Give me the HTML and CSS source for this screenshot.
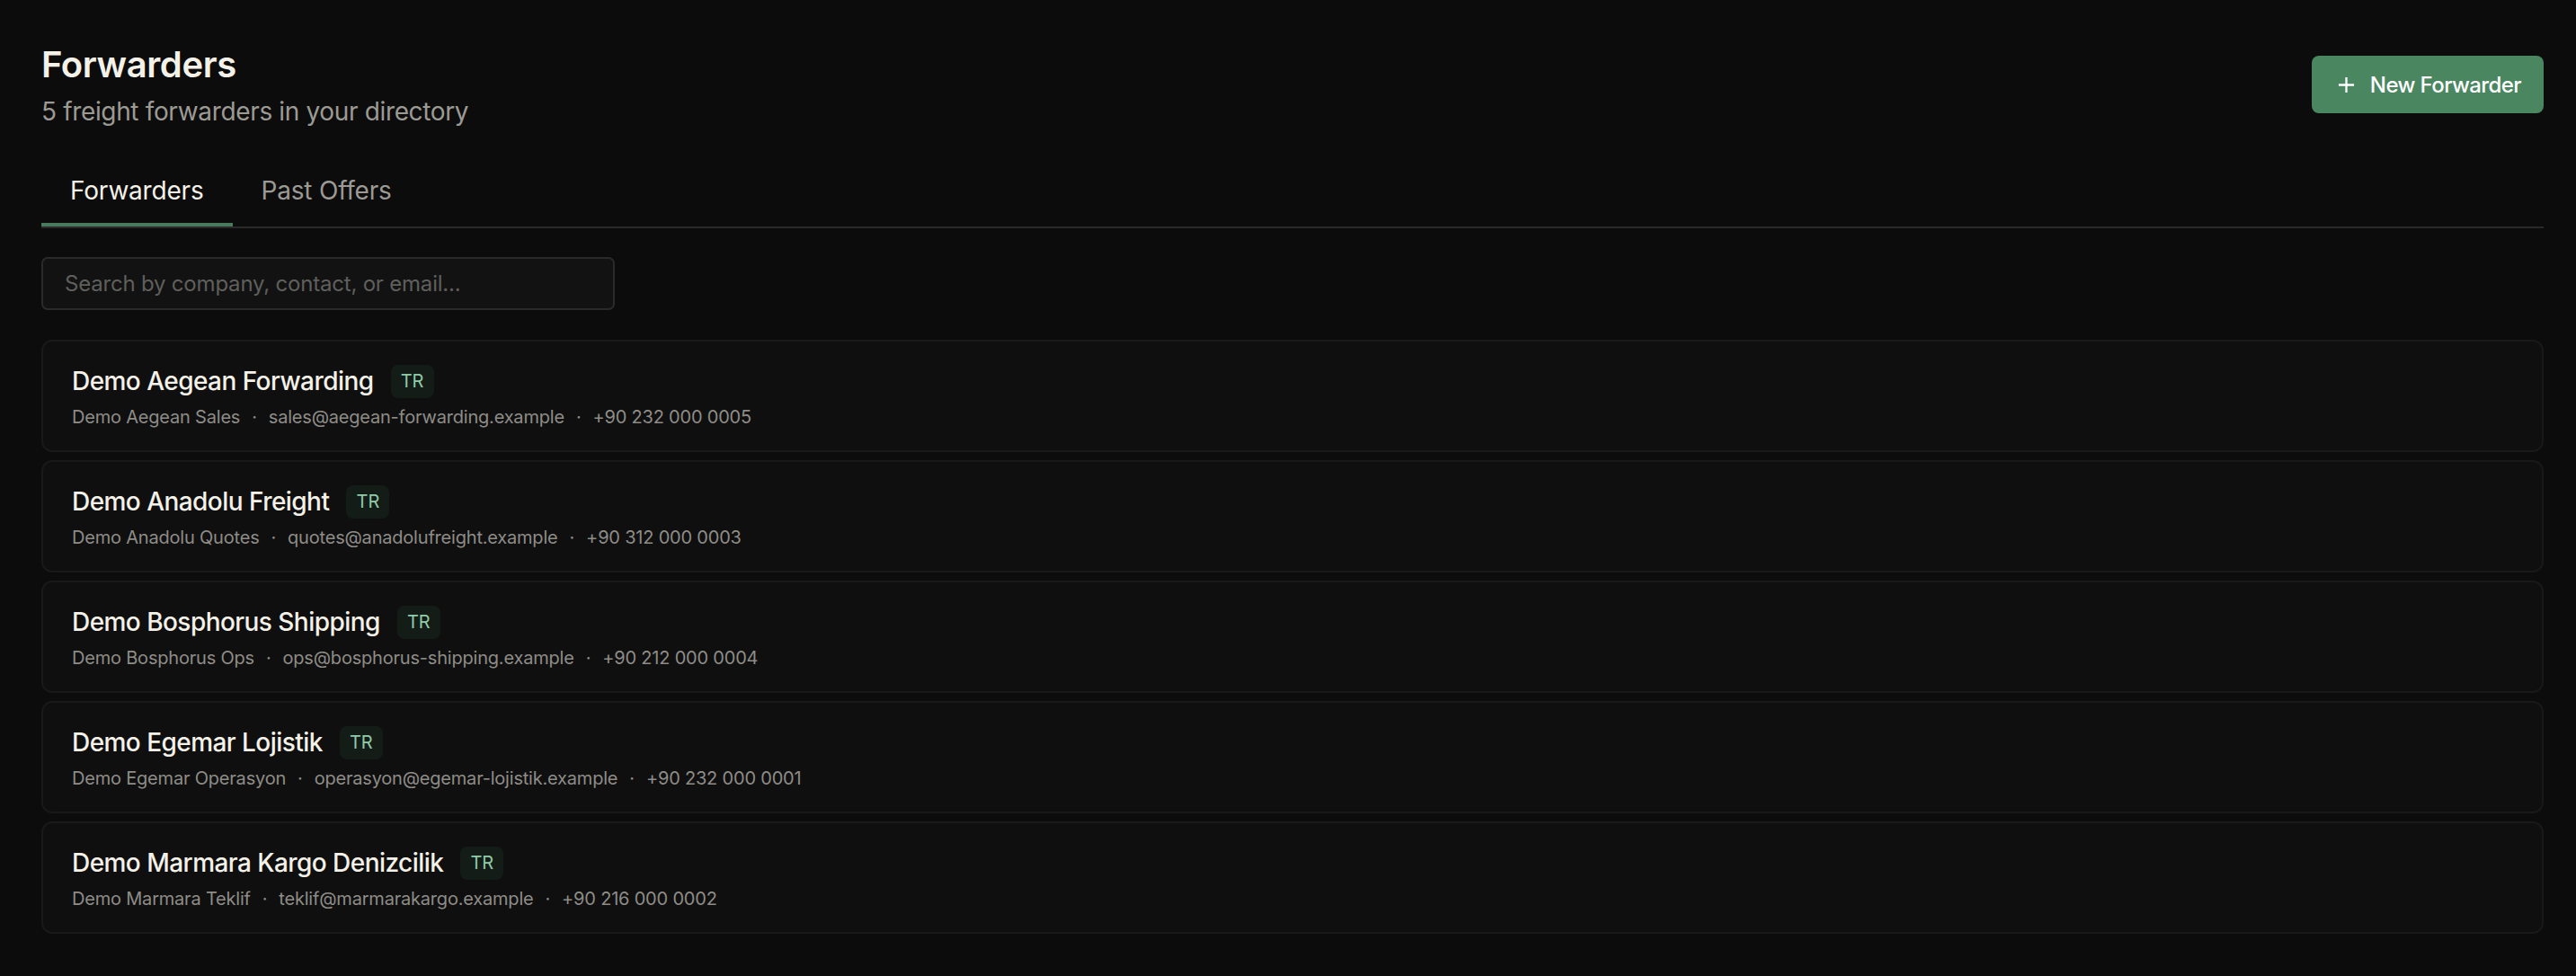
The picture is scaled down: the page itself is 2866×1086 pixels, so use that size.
FILE: index.html
```html
<!DOCTYPE html>
<html lang="en">
<head>
<meta charset="utf-8">
<title>Forwarders</title>
<link rel="stylesheet" href="styles.css">
</head>
<body>
<main class="page">
  <header class="page-header">
    <div class="heading">
      <h1 class="title">Forwarders</h1>
      <p class="subtitle">5 freight forwarders in your directory</p>
    </div>
    <button class="btn-primary" type="button">
      <svg class="plus" viewBox="0 0 20 20" width="19" height="19" aria-hidden="true"><path d="M10 1v18M1 10h18" stroke="currentColor" stroke-width="2.4" fill="none"/></svg>
      <span>New Forwarder</span>
    </button>
  </header>

  <nav class="tabs">
    <a class="tab tab-active">Forwarders</a>
    <a class="tab">Past Offers</a>
  </nav>

  <div class="search">
    <input class="search-input" type="text" placeholder="Search by company, contact, or email...">
  </div>

  <ul class="list">
    <li class="card">
      <div class="card-top"><span class="name">Demo Aegean Forwarding</span><span class="badge">TR</span></div>
      <div class="meta"><span>Demo Aegean Sales</span><span class="sep">·</span><span>sales@aegean-forwarding.example</span><span class="sep">·</span><span>+90 232 000 0005</span></div>
    </li>
    <li class="card">
      <div class="card-top"><span class="name">Demo Anadolu Freight</span><span class="badge">TR</span></div>
      <div class="meta"><span>Demo Anadolu Quotes</span><span class="sep">·</span><span>quotes@anadolufreight.example</span><span class="sep">·</span><span>+90 312 000 0003</span></div>
    </li>
    <li class="card">
      <div class="card-top"><span class="name">Demo Bosphorus Shipping</span><span class="badge">TR</span></div>
      <div class="meta"><span>Demo Bosphorus Ops</span><span class="sep">·</span><span>ops@bosphorus-shipping.example</span><span class="sep">·</span><span>+90 212 000 0004</span></div>
    </li>
    <li class="card">
      <div class="card-top"><span class="name">Demo Egemar Lojistik</span><span class="badge">TR</span></div>
      <div class="meta"><span>Demo Egemar Operasyon</span><span class="sep">·</span><span>operasyon@egemar-lojistik.example</span><span class="sep">·</span><span>+90 232 000 0001</span></div>
    </li>
    <li class="card">
      <div class="card-top"><span class="name">Demo Marmara Kargo Denizcilik</span><span class="badge">TR</span></div>
      <div class="meta"><span>Demo Marmara Teklif</span><span class="sep">·</span><span>teklif@marmarakargo.example</span><span class="sep">·</span><span>+90 216 000 0002</span></div>
    </li>
  </ul>
</main>
</body>
</html>
```

FILE: styles.css
```css
* { box-sizing: border-box; }

html, body {
  margin: 0;
  background: #0c0c0c;
}

body {
  font-family: Inter, "Noto Sans", sans-serif;
  color: #f4f1e8;
}

.page {
  padding: 48px 36px 40px 46px;
}

.page-header {
  display: flex;
  justify-content: space-between;
  align-items: flex-start;
}

.title {
  margin: 0;
  font-size: 40px;
  line-height: 48px;
  font-weight: 600;
  letter-spacing: -0.4px;
  color: #f4f1e8;
}

.subtitle {
  margin: 10px 0 0;
  font-size: 28px;
  line-height: 36px;
  letter-spacing: -0.35px;
  color: #9c9a94;
}

.btn-primary {
  margin-top: 14px;
  display: flex;
  align-items: center;
  gap: 17px;
  height: 64px;
  padding: 0 25px 0 29px;
  background: #4a8660;
  color: #ffffff;
  border: none;
  border-radius: 8px;
  font-family: inherit;
  font-size: 24px;
  font-weight: 500;
  letter-spacing: -0.6px;
}

.plus { display: block; }

.tabs {
  margin-top: 36px;
  display: flex;
  border-bottom: 2px solid #2a2a2a;
}

.tab {
  display: block;
  padding: 0 32px;
  height: 74px;
  line-height: 68px;
  font-size: 28px;
  letter-spacing: -0.2px;
  color: #9c9a94;
  border-bottom: 4px solid transparent;
}

.tab-active {
  color: #f4f1e8;
  border-bottom-color: #487a5e;
}

.search {
  margin-top: 32px;
}

.search-input {
  display: block;
  width: 638px;
  height: 59px;
  padding: 0 24px;
  background: #121212;
  border: 2px solid #2a2a2a;
  border-radius: 7px;
  font-family: inherit;
  font-size: 24px;
  letter-spacing: -0.2px;
  color: #f4f1e8;
}

.search-input::placeholder {
  color: #5f5f5c;
}

.list {
  list-style: none;
  margin: 33px 0 0;
  padding: 0;
  display: flex;
  flex-direction: column;
  gap: 9px;
}

.card {
  height: 125px;
  padding: 25px 32px 0;
  background: #0f0f0f;
  border: 2px solid #191919;
  border-radius: 12px;
}

.card-top {
  display: flex;
  align-items: center;
  gap: 19px;
  height: 38px;
}

.name {
  font-size: 28px;
  font-weight: 500;
  letter-spacing: -0.55px;
  color: #f4f1e8;
}

.badge {
  display: flex;
  align-items: center;
  justify-content: center;
  width: 48px;
  height: 37px;
  border-radius: 8px;
  background: #141c17;
  color: #8fcaa9;
  font-size: 20px;
}

.meta {
  margin-top: 7px;
  font-size: 20px;
  line-height: 28px;
  letter-spacing: -0.2px;
  color: #8e8c87;
  display: flex;
}

.sep {
  margin: 0 13px;
}
```
